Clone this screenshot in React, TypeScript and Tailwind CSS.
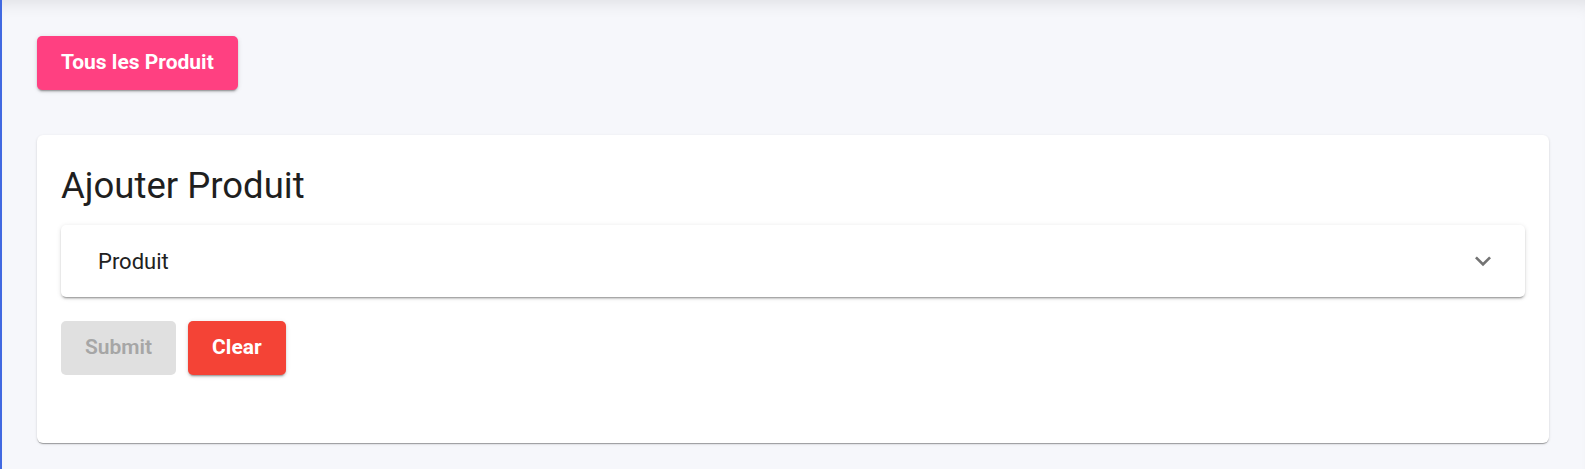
import { useState } from "react";

function ExpandMore() {
  return (
    <svg width="32" height="32" viewBox="0 0 24 24" className="fill-[#737373]">
      <path d="M16.59 8.59 12 13.17 7.41 8.59 6 10l6 6 6-6z" />
    </svg>
  );
}

export default function App() {
  const [produit, setProduit] = useState("");

  return (
    <div
      className="min-h-[469px] w-full bg-[#f6f7fb] border-l-2 border-[#4169e1] pl-[35px] pr-[36px] pt-[36px] shadow-[inset_0_14px_16px_-10px_rgba(0,0,0,0.09)]"
      style={{ fontFamily: "Roboto, 'Liberation Sans', sans-serif" }}
    >
      {/* Header action */}
      <button className="h-[54px] px-6 rounded-[5px] bg-[#ff4081] text-white text-[21px] font-bold shadow-[0_3px_1px_-2px_rgba(0,0,0,0.2),0_2px_2px_0_rgba(0,0,0,0.14),0_1px_5px_0_rgba(0,0,0,0.12)]">
        Tous les Produit
      </button>

      {/* Form card */}
      <div className="mt-[45px] bg-white rounded-[6px] px-6 pt-[29px] pb-[68px] shadow-[0_2px_1px_-1px_rgba(0,0,0,0.2),0_1px_1px_0_rgba(0,0,0,0.14),0_1px_3px_0_rgba(0,0,0,0.12)]">
        <h2 className="h-[44px] leading-[44px] text-[36.5px] font-normal text-[#1f1f1f]">Ajouter Produit</h2>

        <div className="mt-[17px] h-[72px] flex items-center justify-between pl-[37px] pr-[26px] bg-white rounded-[5px] shadow-[0_3px_1px_-2px_rgba(0,0,0,0.2),0_2px_2px_0_rgba(0,0,0,0.14),0_1px_5px_0_rgba(0,0,0,0.12)]">
          <span className="text-[22px] text-[#212121]">{produit || "Produit"}</span>
          <button onClick={() => setProduit("")} className="flex items-center">
            <ExpandMore />
          </button>
        </div>

        <div className="mt-[24px] flex gap-3">
          <button disabled className="h-[54px] px-6 rounded-[5px] bg-[#e0e0e0] text-[#a6a6a6] text-[21px] font-semibold">
            Submit
          </button>
          <button
            onClick={() => setProduit("")}
            className="h-[54px] px-6 rounded-[5px] bg-[#f44336] text-white text-[21px] font-bold shadow-[0_3px_1px_-2px_rgba(0,0,0,0.2),0_2px_2px_0_rgba(0,0,0,0.14),0_1px_5px_0_rgba(0,0,0,0.12)]"
          >
            Clear
          </button>
        </div>
      </div>
    </div>
  );
}
